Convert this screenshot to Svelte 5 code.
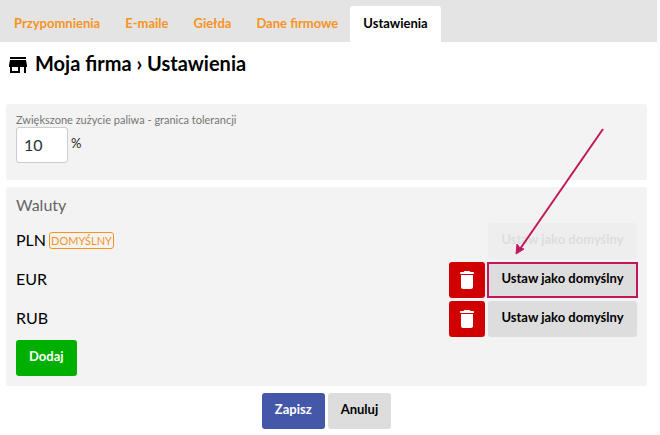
<script>
  const tabs = ['Przypomnienia', 'E-maile', 'Giełda', 'Dane firmowe', 'Ustawienia'];
  let active = $state('Ustawienia');
  let tolerance = $state('10');
  let defaultCode = $state('PLN');
  let currencies = $state(['PLN', 'EUR', 'RUB']);
  const highlighted = 'EUR';
</script>

<div class="page">
  <nav>
    {#each tabs as tab}
      <a href="#{tab}" class:active={tab === active} onclick={() => (active = tab)}>{tab}</a>
    {/each}
  </nav>

  <main>
    <h1>
      <svg width="24" height="24" viewBox="0 0 24 24" aria-hidden="true">
        <path d="M20 4H4v2h16V4zm1 10v-2l-1-5H4l-1 5v2h1v6h10v-6h4v6h2v-6h1zm-9 4H6v-4h6v4z" />
      </svg>
      <span>Moja firma › Ustawienia</span>
    </h1>

    <section class="card tolerance">
      <label for="tolerance">Zwiększone zużycie paliwa - granica tolerancji</label>
      <div class="field">
        <input id="tolerance" type="text" bind:value={tolerance} />
        <span>%</span>
      </div>
    </section>

    <section class="card currencies">
      <h2>Waluty</h2>
      {#each currencies as code}
        <div class="row">
          <div class="name">
            <span>{code}</span>
            {#if code === defaultCode}
              <span class="badge">DOMYŚLNY</span>
            {/if}
          </div>
          <div class="actions">
            {#if code !== defaultCode}
              <button
                class="delete"
                aria-label="Usuń {code}"
                onclick={() => (currencies = currencies.filter((c) => c !== code))}
              >
                <svg width="24" height="24" viewBox="0 0 24 24" aria-hidden="true">
                  <path d="M6 19c0 1.100.9 2 2 2h8c1.100 0 2-.9 2-2V7H6v12zM18 4h-2.500l-.7-.7c-.2-.2-.4-.3-.7-.3H9.900c-.3 0-.5.1-.7.3l-.7.7H6c-.6 0-1 .4-1 1s.4 1 1 1h12c.6 0 1-.4 1-1s-.4-1-1-1z" />
                </svg>
              </button>
            {/if}
            <button
              class="default"
              class:highlight={code === highlighted}
              disabled={code === defaultCode}
              onclick={() => (defaultCode = code)}>Ustaw jako domyślny</button
            >
          </div>
        </div>
      {/each}
      <button class="add">Dodaj</button>
    </section>

    <footer>
      <button class="save">Zapisz</button>
      <button>Anuluj</button>
    </footer>

    <svg class="arrow" width="92" height="130" viewBox="0 0 92 130" aria-hidden="true">
      <path d="M89 3L6 123" fill="none" stroke="#c2185b" stroke-width="2" />
      <path d="M2 128L3 118L6 122L10 123Z" fill="#c2185b" stroke="#c2185b" />
    </svg>
  </main>
</div>

<style>
  :global(body) {
    margin: 0;
    background: #fcfcfc;
  }
  .page {
    margin-right: 3px;
    min-height: 100vh;
    background: #fff;
    color: #000;
    font: 16px/22px Lato, sans-serif;
  }
  nav {
    display: flex;
    padding: 6px 1px 0;
    background: #e4e4e4;
  }
  nav a {
    padding: 6px 12px 8px 13px;
    border-radius: 3px 3px 0 0;
    color: #f7931e;
    font-size: 13px;
    font-weight: 700;
    text-decoration: none;
  }
  nav a.active {
    padding-right: 13px;
    background: #fff;
    color: #000;
  }
  main {
    position: relative;
    padding: 9px 10px 6px 6px;
  }
  h1 {
    display: flex;
    align-items: center;
    gap: 5px;
    height: 28px;
    margin: 0 0 25px;
    font-size: 20px;
    line-height: 24px;
  }
  h1 span {
    padding-bottom: 4px;
  }
  .card {
    margin-bottom: 7px;
    padding: 8px 10px 10px;
    border-radius: 3px;
    background: #f3f3f3;
  }
  .tolerance {
    padding-bottom: 17px;
  }
  label {
    display: block;
    color: #757575;
    font-size: 11px;
    line-height: 15px;
  }
  .field {
    display: flex;
    gap: 3px;
    line-height: 32px;
  }
  input {
    box-sizing: border-box;
    width: 52px;
    height: 36px;
    padding: 0 7px 2px;
    border: 1px solid #ccc;
    border-radius: 3px;
    background: #fff;
    color: #263238;
    font: 16px Lato, sans-serif;
  }
  .field span {
    font-size: 13px;
    color: #222;
  }
  h2 {
    margin: 0 0 8px;
    color: #666;
    font-size: 16px;
    font-weight: 400;
    line-height: 20px;
  }
  .row {
    display: flex;
    align-items: center;
    justify-content: space-between;
    height: 36px;
    margin-bottom: 3px;
  }
  .name {
    display: flex;
    align-items: center;
    gap: 3px;
    padding-bottom: 2px;
  }
  .badge {
    padding: 0 1px;
    border: 1px solid #f7931e;
    border-radius: 3px;
    color: #f7931e;
    font-size: 11px;
    line-height: 15px;
  }
  .actions {
    display: flex;
    gap: 3px;
  }
  button {
    height: 36px;
    padding: 0 13px 4px;
    border: 0;
    border-radius: 3px;
    background: #ddd;
    color: #000;
    font: 700 13px/32px Lato, sans-serif;
  }
  button:disabled {
    color: #888;
    opacity: 0.2;
  }
  .default {
    position: relative;
    min-width: 149px;
  }
  .highlight::after {
    content: '';
    position: absolute;
    inset: 0 -1px;
    border: 2px solid #c2185b;
  }
  .delete {
    display: flex;
    align-items: center;
    justify-content: center;
    width: 36px;
    padding: 0;
    background: #d00000;
    fill: #fff;
  }
  .add {
    display: block;
    background: #00b000;
    color: #fff;
  }
  footer {
    display: flex;
    justify-content: center;
    gap: 3px;
  }
  .save {
    background: #4557a9;
    color: #fff;
  }
  .arrow {
    position: absolute;
    top: 84px;
    right: 51px;
    pointer-events: none;
  }
</style>
